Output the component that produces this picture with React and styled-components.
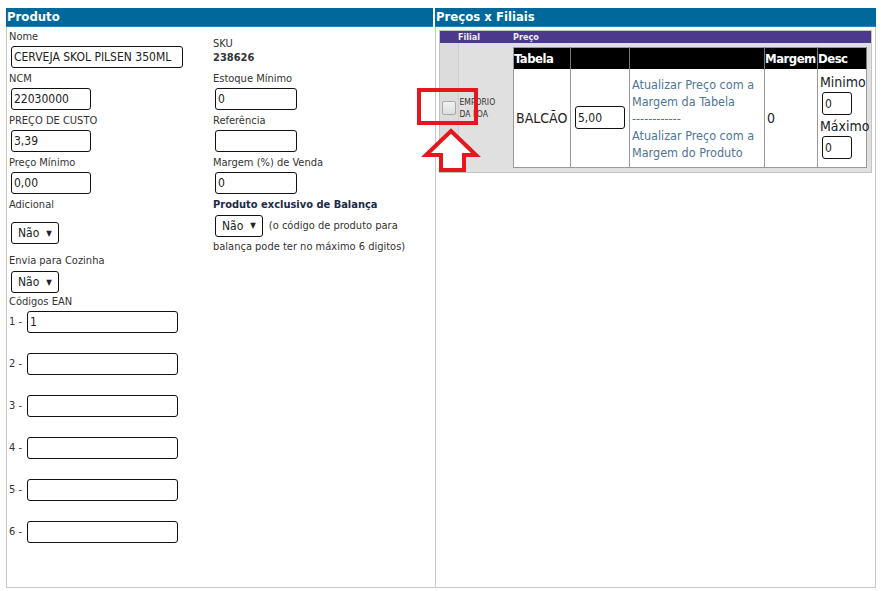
import React from 'react';
import styled, { createGlobalStyle } from 'styled-components';

const GlobalStyle = createGlobalStyle`
	html, body {
		margin: 0;
		padding: 0;
		background: #fff;
	}
	body {
		font-family: "DejaVu Sans Condensed", "DejaVu Sans", sans-serif;
		font-stretch: condensed;
		color: #333;
	}
`

const Page = styled.div`
	position: relative;
	display: grid;
	grid-template-columns: 429px 441px;
	margin: 8px 0 0 6px;
	width: 870px;
`

const Column = styled.section`
	display: flex;
	flex-direction: column;
`

const SectionTitle = styled.div`
	height: 18px;
	line-height: 18px;
	background: #00689b;
	color: #fff;
	font-weight: bold;
	font-size: 13px;
	padding-left: 1px;
	margin-right: ${p => p.$gap || 0}px;
	border-bottom: 1px solid #2a86b8;
`

const Panel = styled.div`
	height: 561px;
	border-left: 1px solid #c8c8c8;
	border-right: ${p => p.$right ? '1px solid #c8c8c8' : 'none'};
	border-bottom: 1px solid #c8c8c8;
	box-sizing: border-box;
	padding: ${p => p.$pad || '3px 0 0 2px'};
`

const FormRow = styled.div`
	display: grid;
	grid-template-columns: 204px 1fr;
	height: ${p => p.$h}px;
`

const Cell = styled.div`
	display: flex;
	flex-direction: column;
	justify-content: ${p => p.$center ? 'center' : 'flex-start'};
	align-items: flex-start;
`

const Label = styled.div`
	font-size: 11px;
	line-height: 14px;
	color: ${p => p.$strong ? '#1c2a48' : '#333'};
	font-weight: ${p => p.$strong ? 'bold' : 'normal'};
`

const Value = styled.div`
	font-size: 11px;
	line-height: 14px;
	font-weight: bold;
	color: #333;
`

const TextBox = styled.input`
	box-sizing: border-box;
	width: ${p => p.$w}px;
	height: 22px;
	border: 1px solid #111;
	border-radius: 3px;
	padding: 0 2px;
	margin: 2px 0 0 2px;
	font-family: inherit;
	font-stretch: condensed;
	font-size: 12px;
	color: #222;
	background: #fff;
	outline: none;
`

const Select = styled.div`
	box-sizing: border-box;
	display: inline-flex;
	align-items: center;
	gap: 7px;
	height: 22px;
	padding: 0 6px;
	margin: ${p => p.$m || '0 0 0 2px'};
	border: 1px solid #111;
	border-radius: 3px;
	font-size: 12px;
	color: #222;
	background: #fff;
	&::after {
		content: '▼';
		font-size: 8px;
	}
`

const Inline = styled.div`
	display: flex;
	align-items: center;
	gap: 6px;
	margin-top: 3px;
	font-size: 11px;
	line-height: 14px;
`

const Note = styled.div`
	font-size: 11px;
	line-height: 18px;
	margin-top: 1px;
`

const EanRow = styled.div`
	display: flex;
	height: 42px;
	align-items: flex-start;
	font-size: 11px;
	span {
		width: 18px;
		line-height: 22px;
		margin-top: 2px;
	}
	input {
		margin-left: 0;
	}
`

const Grid = styled.table`
	width: 433px;
	table-layout: fixed;
	border-collapse: collapse;
	background: #ddd;
	border: 1px solid #c4c4c4;
`

const GridHead = styled.th`
	background: #4b3a8c;
	color: #eee;
	font-size: 9px;
	font-weight: bold;
	height: 12px;
	padding: 0;
	text-align: left;
	width: ${p => p.$w ? p.$w + 'px' : 'auto'};
	padding-left: ${p => p.$pl || 0}px;
`

const CheckCell = styled.td`
	padding: 0;
	border-right: 1px solid #cfcfcf;
	background: #dcdcdc;
	text-align: center;
	vertical-align: middle;
`

const Check = styled.span`
	display: inline-block;
	width: 12px;
	height: 12px;
	border: 1px solid #a8a8a8;
	border-radius: 2px;
	background: linear-gradient(#f2f2f2, #dedede);
	margin-top: 4px;
`

const FilialCell = styled.td`
	padding: 0 0 0 1px;
	font-size: 8.5px;
	line-height: 12px;
	color: #333;
	vertical-align: middle;
	background: #e0e0e0;
`

const PriceCell = styled.td`
	padding: 4px 4px 4px 2px;
	background: #e0e0e0;
`

const Prices = styled.table`
	width: 100%;
	table-layout: fixed;
	border-collapse: collapse;
	background: #fff;
	border: 1px solid #999;
`

const PH = styled.th`
	background: #000;
	color: #fff;
	font-size: 13px;
	letter-spacing: -0.5px;
	font-weight: bold;
	height: 21px;
	padding: 0;
	text-align: left;
	white-space: nowrap;
	overflow: hidden;
	border-right: 1px solid #777;
	width: ${p => p.$w ? p.$w + 'px' : 'auto'};
`

const PD = styled.td`
	font-size: 14px;
	color: #222;
	padding: 0 2px;
	height: 98px;
	border-right: 1px solid #999;
	vertical-align: middle;
`

const LinkText = styled.div`
	color: #4e7594;
	font-size: 12.5px;
	line-height: 17px;
	white-space: nowrap;
`

const SmallBox = styled(TextBox)`
	margin: 2px 0 3px 2px;
	height: 23px;
	font-size: 12px;
`

const Overlay = styled.svg`
	position: absolute;
	left: -6px;
	top: -8px;
	pointer-events: none;
`

const eans = ['1', '', '', '', '', ''];

export default function App() {
	return (
		<>
			<GlobalStyle />
			<Page>
				<Column>
					<SectionTitle $gap={2}>Produto</SectionTitle>
					<Panel>
						<FormRow $h={42}>
							<Cell>
								<Label>Nome</Label>
								<TextBox $w={172} defaultValue="CERVEJA SKOL PILSEN 350ML" />
							</Cell>
							<Cell $center>
								<Label>SKU</Label>
								<Value>238626</Value>
							</Cell>
						</FormRow>
						<FormRow $h={42}>
							<Cell>
								<Label>NCM</Label>
								<TextBox $w={80} defaultValue="22030000" />
							</Cell>
							<Cell>
								<Label>Estoque Mínimo</Label>
								<TextBox $w={82} defaultValue="0" />
							</Cell>
						</FormRow>
						<FormRow $h={42}>
							<Cell>
								<Label>PREÇO DE CUSTO</Label>
								<TextBox $w={80} defaultValue="3,39" />
							</Cell>
							<Cell>
								<Label>Referência</Label>
								<TextBox $w={82} defaultValue="" />
							</Cell>
						</FormRow>
						<FormRow $h={42}>
							<Cell>
								<Label>Preço Mínimo</Label>
								<TextBox $w={80} defaultValue="0,00" />
							</Cell>
							<Cell>
								<Label>Margem (%) de Venda</Label>
								<TextBox $w={82} defaultValue="0" />
							</Cell>
						</FormRow>
						<FormRow $h={56}>
							<Cell>
								<Label>Adicional</Label>
								<Select $m="10px 0 0 2px">Não</Select>
							</Cell>
							<Cell>
								<Label $strong>Produto exclusivo de Balança</Label>
								<Inline>
									<Select>Não</Select>
									(o código de produto para
								</Inline>
								<Note>balança pode ter no máximo 6 digitos)</Note>
							</Cell>
						</FormRow>
						<FormRow $h={41}>
							<Cell>
								<Label>Envia para Cozinha</Label>
								<Select $m="3px 0 0 2px">Não</Select>
							</Cell>
						</FormRow>
						<Label>Códigos EAN</Label>
						{eans.map((v, i) => (
							<EanRow key={i}>
								<span>{i + 1} -</span>
								<TextBox $w={151} defaultValue={v} />
							</EanRow>
						))}
					</Panel>
				</Column>
				<Column>
					<SectionTitle>Preços x Filiais</SectionTitle>
					<Panel $right $pad="3px 0 0 3px">
						<Grid>
							<thead>
								<tr>
									<GridHead $w={18}></GridHead>
									<GridHead $w={53}>Filial</GridHead>
									<GridHead $pl={2}>Preço</GridHead>
								</tr>
							</thead>
							<tbody>
								<tr>
									<CheckCell><Check /></CheckCell>
									<FilialCell>EMPORIO<br />DA LOA</FilialCell>
									<PriceCell>
										<Prices>
											<thead>
												<tr>
													<PH $w={56}>Tabela</PH>
													<PH $w={58}></PH>
													<PH $w={134}></PH>
													<PH $w={52}>Margem</PH>
													<PH>Desc</PH>
												</tr>
											</thead>
											<tbody>
												<tr>
													<PD>BALCÃO</PD>
													<PD><SmallBox $w={50} defaultValue="5,00" /></PD>
													<PD>
														<LinkText>Atualizar Preço com a<br />Margem da Tabela</LinkText>
														<LinkText>------------</LinkText>
														<LinkText>Atualizar Preço com a<br />Margem do Produto</LinkText>
													</PD>
													<PD>0</PD>
													<PD>
														<div>Minimo</div>
														<SmallBox $w={30} defaultValue="0" />
														<div>Máximo</div>
														<SmallBox $w={30} defaultValue="0" />
													</PD>
												</tr>
											</tbody>
										</Prices>
									</PriceCell>
								</tr>
							</tbody>
						</Grid>
					</Panel>
				</Column>
				<Overlay width="883" height="591" viewBox="0 0 883 591">
					<rect x="419" y="90" width="57" height="33" fill="none" stroke="#e5161e" strokeWidth="4" />
					<polygon
						points="451,131 476,155 464,155 464,170 441,170 441,155 426,155"
						fill="#fff"
						stroke="#e5161e"
						strokeWidth="4"
						strokeLinejoin="miter"
					/>
				</Overlay>
			</Page>
		</>
	);
}
